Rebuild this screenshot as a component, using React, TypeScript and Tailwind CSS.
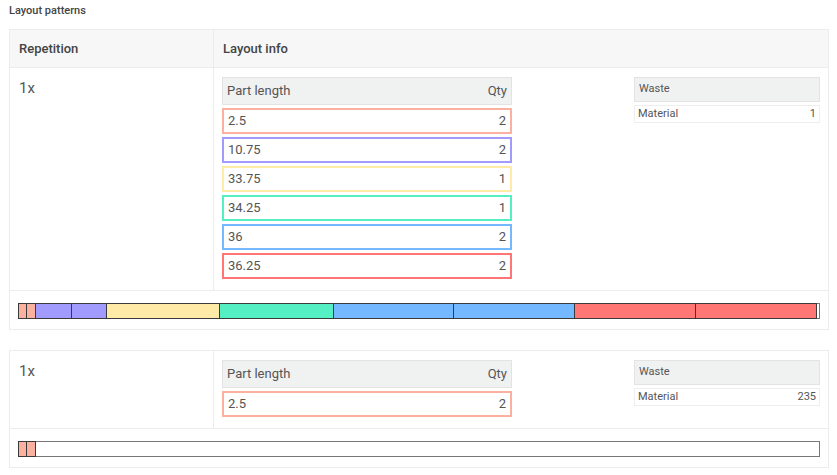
type Part = { length: number; qty: number; color: string; border: string };

const C = {
  salmon: { bg: "bg-[#fab1a0]", border: "border-[#fab1a0]" },
  purple: { bg: "bg-[#a29bfe]", border: "border-[#a29bfe]" },
  yellow: { bg: "bg-[#ffeaa7]", border: "border-[#ffeaa7]" },
  green: { bg: "bg-[#55efc4]", border: "border-[#55efc4]" },
  blue: { bg: "bg-[#74b9ff]", border: "border-[#74b9ff]" },
  red: { bg: "bg-[#ff7675]", border: "border-[#ff7675]" },
};

const STOCK = 240;

type Pattern = { parts: Part[]; waste: number };

const patterns: Pattern[] = [
  {
    parts: [
      { length: 2.5, qty: 2, color: C.salmon.bg, border: C.salmon.border },
      { length: 10.75, qty: 2, color: C.purple.bg, border: C.purple.border },
      { length: 33.75, qty: 1, color: C.yellow.bg, border: C.yellow.border },
      { length: 34.25, qty: 1, color: C.green.bg, border: C.green.border },
      { length: 36, qty: 2, color: C.blue.bg, border: C.blue.border },
      { length: 36.25, qty: 2, color: C.red.bg, border: C.red.border },
    ],
    waste: 1,
  },
  {
    parts: [{ length: 2.5, qty: 2, color: C.salmon.bg, border: C.salmon.border }],
    waste: 235,
  },
];

function Bar({ pattern }: { pattern: Pattern }) {
  // one block per piece, width relative to stock length
  const pieces: Part[] = [];
  pattern.parts.forEach((p) => {
    for (let i = 0; i < p.qty; i++) pieces.push(p);
  });
  return (
    <div className="flex h-[16px] w-full border-l border-[#3a3a3a]">
      {pieces.map((p, i) => (
        <div
          key={i}
          className={`h-full shrink-0 border-y border-r border-[#3a3a3a] ${p.color}`}
          style={{ width: `${(p.length / STOCK) * 100}%` }}
        />
      ))}
      <div
        className="h-full shrink-0 border-y border-r border-[#777] bg-white"
        style={{ width: `${(pattern.waste / STOCK) * 100}%` }}
      />
    </div>
  );
}

function PatternBlock({ pattern, header }: { pattern: Pattern; header?: boolean }) {
  return (
    <div className="border border-[#ececec] bg-white">
      {header && (
        <div className="flex h-[38px] items-center bg-[#f7f7f7] border-b border-[#ececec] text-[13px] font-medium text-[#444]">
          <div className="w-[204px] shrink-0 pl-[9px] border-r border-[#ececec] h-full flex items-center">Repetition</div>
          <div className="pl-[9px]">Layout info</div>
        </div>
      )}
      <div className="flex border-b border-[#ececec]">
        <div className="w-[204px] shrink-0 border-r border-[#ececec] pl-[9px] pt-[9px] text-[15px] text-[#555]">1x</div>
        <div className="flex flex-1 justify-between pl-[8px] pr-[8px] pt-[9px] pb-[11px]">
          <div className="w-[290px] flex flex-col gap-[3px]">
            <div className="flex h-[28px] items-center justify-between border border-[#e3e3e3] bg-[#f0f1f1] px-[4px] text-[13px] text-[#555]">
              <span>Part length</span>
              <span>Qty</span>
            </div>
            {pattern.parts.map((p) => (
              <div
                key={p.length}
                className={`flex h-[26px] items-center justify-between border-2 ${p.border} px-[4px] text-[13px] text-[#555]`}
              >
                <span>{p.length}</span>
                <span>{p.qty}</span>
              </div>
            ))}
          </div>
          <div className="w-[186px] flex flex-col gap-[3px]">
            <div className="flex h-[25px] items-center border border-[#e3e3e3] bg-[#f0f1f1] px-[4px] text-[11px] text-[#555]">
              Waste
            </div>
            <div className="flex h-[18px] items-center justify-between border border-[#eeeeee] px-[3px] text-[11px] text-[#555]">
              <span>Material</span>
              <span>{pattern.waste}</span>
            </div>
          </div>
        </div>
      </div>
      <div className="px-[8px] pt-[12px] pb-[10px]">
        <Bar pattern={pattern} />
      </div>
    </div>
  );
}

export default function App() {
  return (
    <div className="min-h-screen bg-white font-['Roboto',sans-serif] pl-[9px] pr-[8px]">
      <div className="pt-[3px] h-[29px] text-[11px] font-medium text-[#444]">Layout patterns</div>
      <div className="flex flex-col gap-[20px]">
        <PatternBlock pattern={patterns[0]} header />
        <PatternBlock pattern={patterns[1]} />
      </div>
    </div>
  );
}
